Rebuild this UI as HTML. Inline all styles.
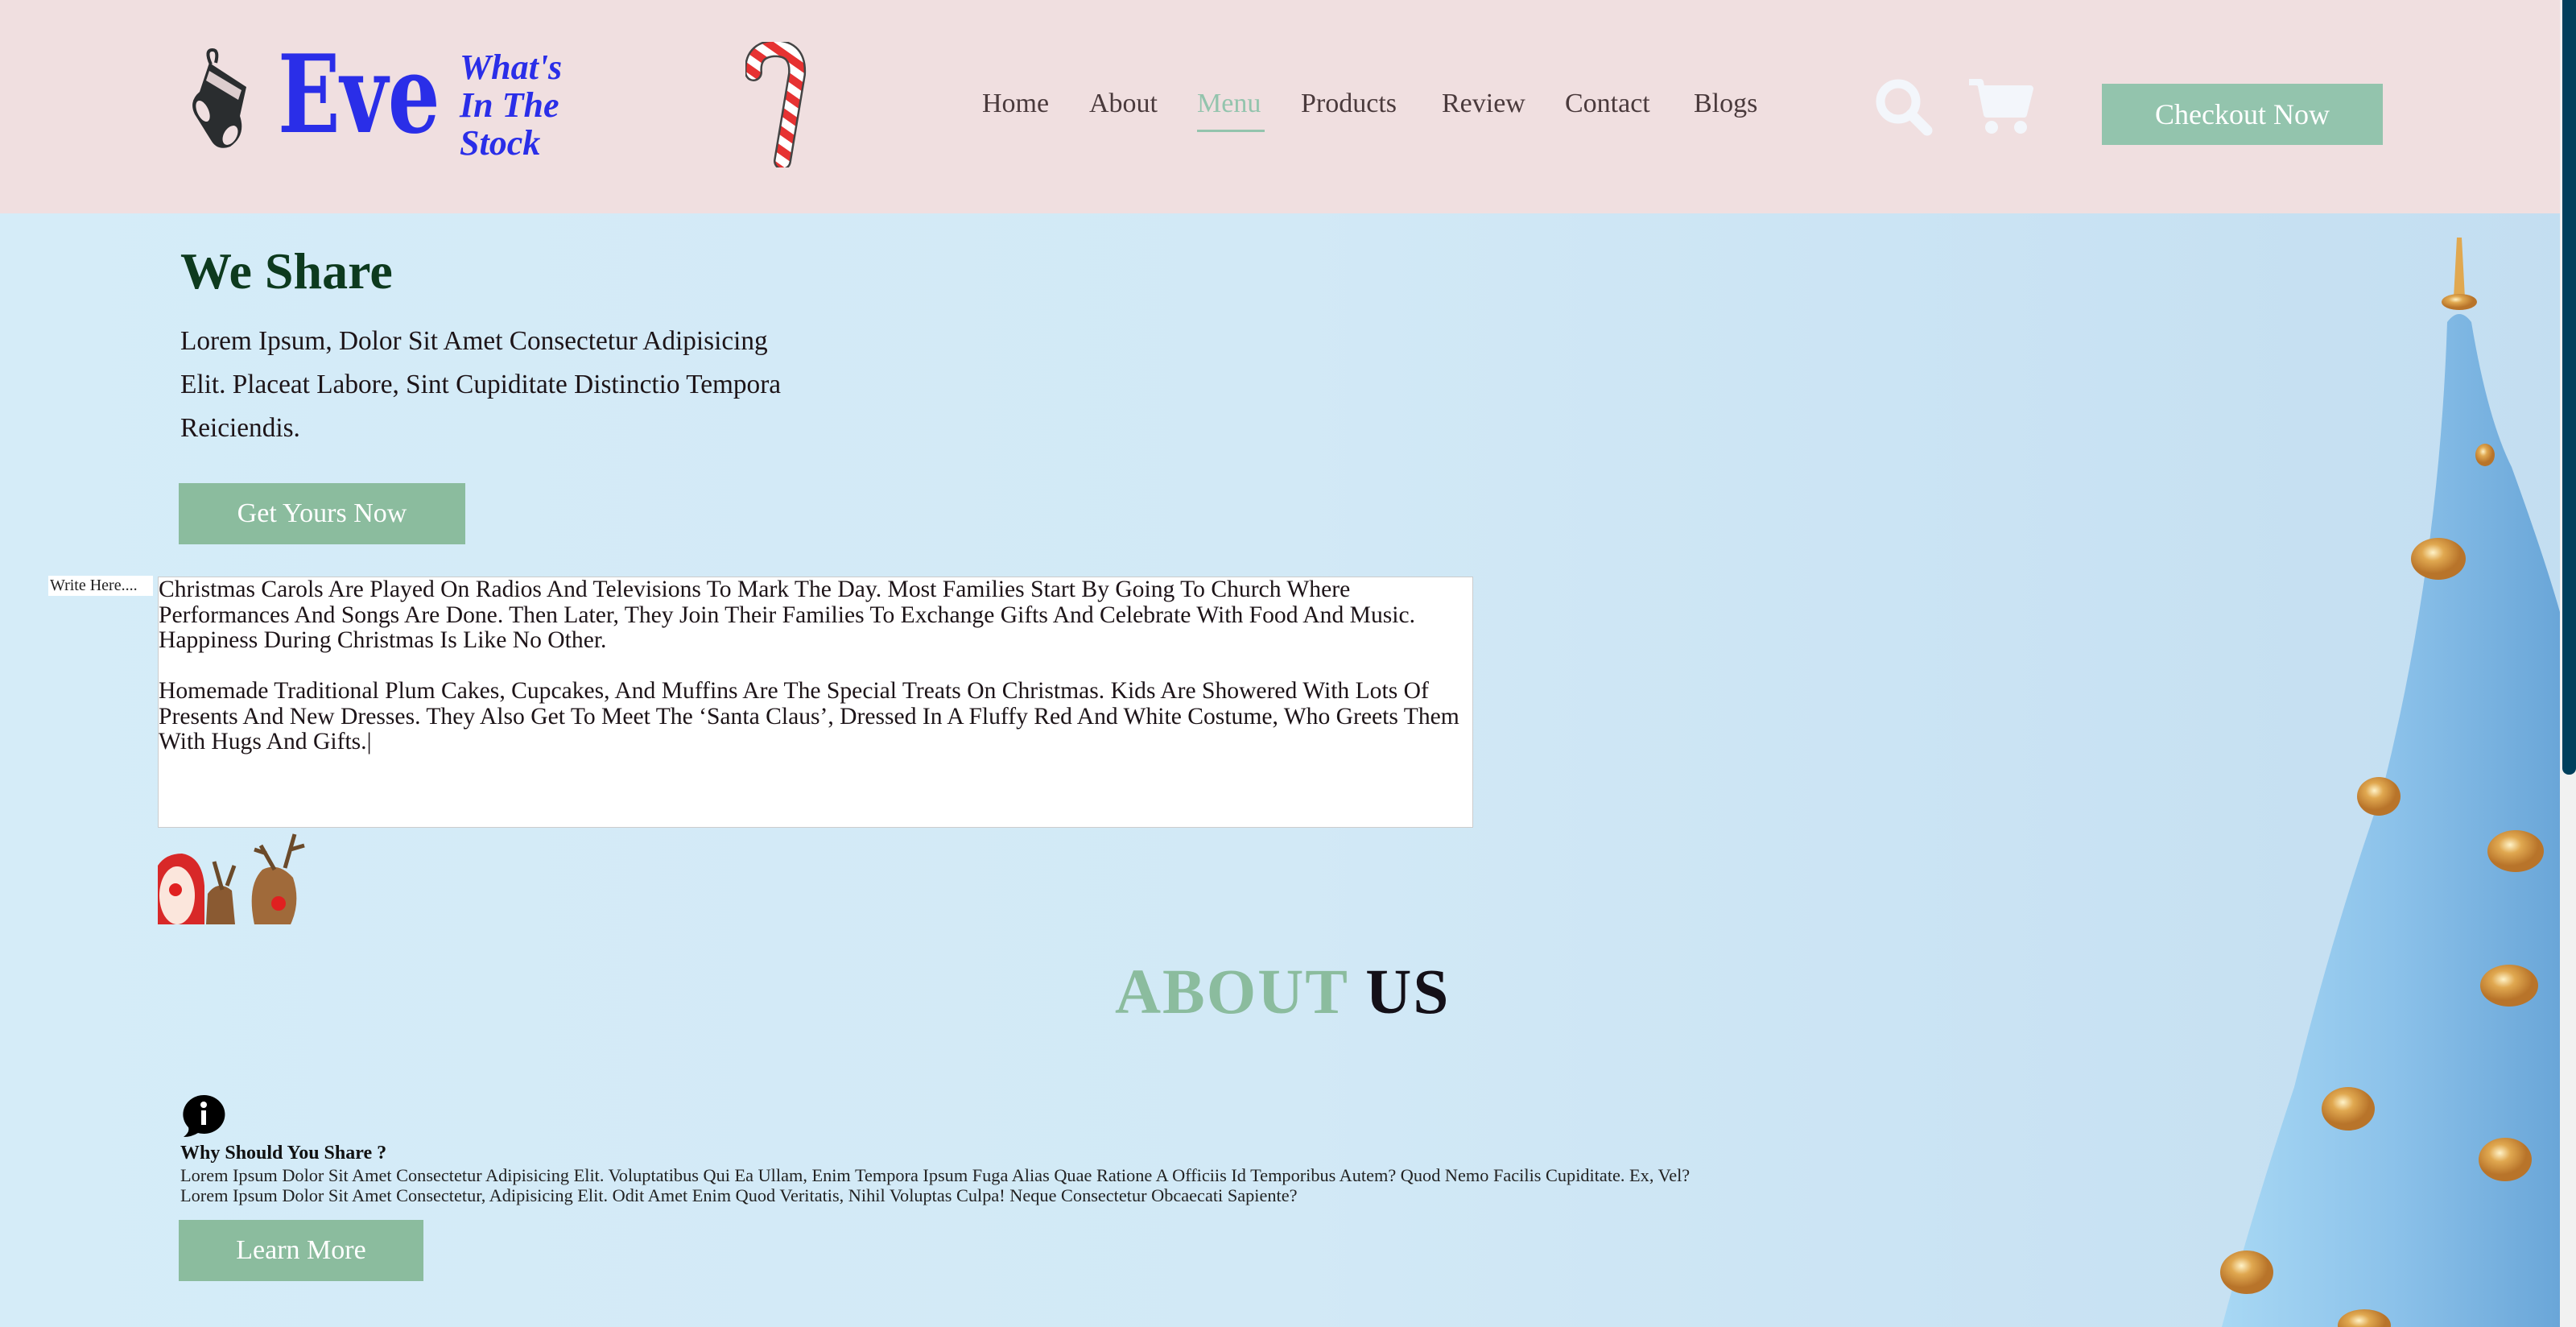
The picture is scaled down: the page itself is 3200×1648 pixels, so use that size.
<!DOCTYPE html>
<html><head><meta charset="utf-8"><style>
*{margin:0;padding:0;box-sizing:border-box}
body{width:3200px;height:1648px;overflow:hidden;position:relative;font-family:"Liberation Serif",serif;background:linear-gradient(90deg,#d5ecf8 0%,#d2e9f6 50%,#c3def1 100%)}
.a{position:absolute;white-space:nowrap}
header{position:absolute;left:0;top:0;width:3180px;height:265px;background:#f0dfe0}
.nav{font-size:34px;color:#4a3a3c;top:110px}
.btn{position:absolute;background:#8bbc9e;color:#fff;display:flex;align-items:center;justify-content:center}
</style></head><body>
<header>
<svg class="a" style="left:236px;top:58px" width="84" height="128" viewBox="0 0 84 128">
<path d="M26 22 Q18 4 28 4 Q36 4 32 20" fill="none" stroke="#2a2d2f" stroke-width="4"/>
<path d="M24 20 L70 50 L62 86 Q70 110 50 124 Q34 130 26 116 L6 84 Q-2 68 12 56 Z" fill="#2a2d2f"/>
<path d="M24 30 L64 54 L60 66 L20 42Z" fill="#f0dfe0" opacity=".9"/>
<ellipse cx="16" cy="80" rx="7" ry="14" fill="#f0dfe0" transform="rotate(-25 16 80)"/>
<ellipse cx="50" cy="110" rx="8" ry="13" fill="#f0dfe0" transform="rotate(30 50 110)"/>
</svg>
<div class="a" style="left:345px;top:50px;font-size:134px;font-weight:bold;color:#2a2ee8;line-height:1;font-family:'DejaVu Serif',serif;transform:scaleX(.76);transform-origin:left">Eve</div>
<div class="a" style="left:571px;top:60px;font-size:44px;font-style:italic;font-weight:bold;color:#2a2ee8;line-height:47px">What's<br>In The<br>Stock</div>
<svg class="a" style="left:926px;top:52px" width="76" height="156" viewBox="0 0 76 156">
<defs><pattern id="st" width="20" height="20" patternUnits="userSpaceOnUse" patternTransform="rotate(35)"><rect width="20" height="20" fill="#fff"/><rect width="20" height="10" fill="#e63232"/></pattern></defs>
<path d="M10 38 Q8 10 36 8 Q66 8 64 40 L46 148" fill="none" stroke="#444" stroke-width="22" stroke-linecap="round"/>
<path d="M10 38 Q8 10 36 8 Q66 8 64 40 L46 148" fill="none" stroke="url(#st)" stroke-width="17" stroke-linecap="round"/>
</svg>
<div class="a nav" style="left:1220px">Home</div>
<div class="a nav" style="left:1353px">About</div>
<div class="a nav" style="left:1487px;color:#93c4ad">Menu</div>
<div class="a" style="left:1487px;top:161px;width:84px;height:3px;background:#93c4ad"></div>
<div class="a nav" style="left:1616px">Products</div>
<div class="a nav" style="left:1791px">Review</div>
<div class="a nav" style="left:1944px">Contact</div>
<div class="a nav" style="left:2104px">Blogs</div>
<svg class="a" style="left:2328px;top:96px" width="74" height="74" viewBox="0 0 74 74"><circle cx="30" cy="30" r="22" fill="none" stroke="#f3f6fb" stroke-width="11"/><path d="M46 46 L66 66" stroke="#f3f6fb" stroke-width="13" stroke-linecap="round"/></svg>
<svg class="a" style="left:2444px;top:96px" width="82" height="72" viewBox="0 0 82 72"><path d="M2 6 H16 L24 46 H70 L78 14 H20" fill="#f3f6fb" stroke="#f3f6fb" stroke-width="8" stroke-linejoin="round"/><circle cx="30" cy="62" r="8" fill="#f3f6fb"/><circle cx="66" cy="62" r="8" fill="#f3f6fb"/></svg>
<div class="btn" style="left:2611px;top:104px;width:349px;height:76px;font-size:36px;background:#93c4ad">Checkout Now</div>
</header>
<div class="a" style="left:3180px;top:0;width:20px;height:1648px;background:#f1f1f1"></div>
<div class="a" style="left:3183px;top:0;width:17px;height:962px;background:#003f5c;border-radius:0 0 8px 8px"></div>

<svg class="a" style="left:2700px;top:265px" width="480" height="1383" viewBox="2700 265 480 1383">
<defs><linearGradient id="tg" x1="0" x2="1"><stop offset="0" stop-color="#a8d8f4"/><stop offset=".5" stop-color="#8cc2ea"/><stop offset="1" stop-color="#6aa6d8"/></linearGradient>
<radialGradient id="gd" cx=".4" cy=".35"><stop offset="0" stop-color="#fff3c8"/><stop offset=".4" stop-color="#e0a850"/><stop offset="1" stop-color="#b8742a"/></radialGradient></defs>
<path d="M3040 400 Q3055 380 3070 400 Q3090 520 3120 580 Q3160 690 3180 760 L3180 1648 L2760 1648 Q2800 1500 2850 1350 Q2900 1150 2960 980 Q3030 700 3040 400Z" fill="url(#tg)"/>
<path d="M3052 295 L3058 295 L3062 370 L3048 370Z" fill="#e0a850"/>
<ellipse cx="3055" cy="375" rx="22" ry="10" fill="url(#gd)"/>
<g fill="url(#gd)">
<ellipse cx="3029" cy="694" rx="34" ry="26"/><ellipse cx="3087" cy="565" rx="12" ry="14"/>
<ellipse cx="2955" cy="989" rx="27" ry="24"/><ellipse cx="3125" cy="1057" rx="35" ry="26"/>
<ellipse cx="3117" cy="1224" rx="36" ry="26"/><ellipse cx="2917" cy="1377" rx="33" ry="27"/>
<ellipse cx="3112" cy="1440" rx="33" ry="27"/><ellipse cx="2791" cy="1580" rx="33" ry="27"/><ellipse cx="2937" cy="1646" rx="33" ry="20"/>
</g></svg>

<div class="a" style="left:224px;top:300px;font-size:64px;font-weight:bold;color:#0d3a1e">We Share</div>
<div class="a" style="left:224px;top:397px;font-size:33.3px;line-height:54px;color:#1d1418">Lorem Ipsum, Dolor Sit Amet Consectetur Adipisicing<br>Elit. Placeat Labore, Sint Cupiditate Distinctio Tempora<br>Reiciendis.</div>
<div class="btn" style="left:222px;top:600px;width:356px;height:76px;font-size:34px">Get Yours Now</div>

<div class="a" style="left:60px;top:715px;width:130px;height:25px;background:#fff;font-size:20px;line-height:25px;padding-left:2px;color:#222">Write Here....</div>
<div class="a" style="left:196px;top:716px;width:1634px;height:312px;background:#fff;border:1px solid #ccc;font-size:29.6px;line-height:31.5px;color:#1d1418;padding:0">Christmas Carols Are Played On Radios And Televisions To Mark The Day. Most Families Start By Going To Church Where<br>Performances And Songs Are Done. Then Later, They Join Their Families To Exchange Gifts And Celebrate With Food And Music.<br>Happiness During Christmas Is Like No Other.<br><br>Homemade Traditional Plum Cakes, Cupcakes, And Muffins Are The Special Treats On Christmas. Kids Are Showered With Lots Of<br>Presents And New Dresses. They Also Get To Meet The ‘Santa Claus’, Dressed In A Fluffy Red And White Costume, Who Greets Them<br>With Hugs And Gifts.|</div>

<svg class="a" style="left:196px;top:1030px" width="204" height="118" viewBox="0 0 204 118">
<path d="M0 45 Q10 30 30 30 Q55 34 58 70 L58 118 L0 118Z" fill="#d82828"/>
<ellipse cx="24" cy="82" rx="22" ry="36" fill="#fbe6dc"/><circle cx="22" cy="75" r="8" fill="#e02020"/>
<path d="M60 118 L62 80 Q75 62 92 76 L96 118Z" fill="#8a5a32"/>
<path d="M120 118 Q110 70 130 50 Q150 40 168 60 Q178 90 165 118Z" fill="#a06a3a"/>
<circle cx="150" cy="92" r="9" fill="#e02020"/>
<path d="M145 50 L128 20 M135 30 L120 25 M158 48 L170 6 M165 25 L182 20 M80 75 L70 40 M86 70 L95 45" stroke="#6b4a2a" stroke-width="5"/>
</svg>

<div class="a" style="left:1385px;top:1188px;font-size:79px;font-weight:bold;letter-spacing:2px"><span style="color:#8bbc9e">ABOUT</span> <span style="color:#141018">US</span></div>

<svg class="a" style="left:224px;top:1358px" width="58" height="56" viewBox="0 0 58 56"><path d="M29 2 A26 24 0 1 1 22 49 Q14 54 4 54 Q12 48 10 42 A26 24 0 0 1 29 2Z" fill="#000"/><circle cx="29" cy="14" r="4" fill="#fff"/><rect x="26" y="21" width="6" height="18" fill="#fff"/></svg>
<div class="a" style="left:224px;top:1419px;font-size:24px;font-weight:bold;color:#111">Why Should You Share ?</div>
<div class="a" style="left:224px;top:1447px;font-size:22.3px;line-height:25px;color:#222">Lorem Ipsum Dolor Sit Amet Consectetur Adipisicing Elit. Voluptatibus Qui Ea Ullam, Enim Tempora Ipsum Fuga Alias Quae Ratione A Officiis Id Temporibus Autem? Quod Nemo Facilis Cupiditate. Ex, Vel?<br>Lorem Ipsum Dolor Sit Amet Consectetur, Adipisicing Elit. Odit Amet Enim Quod Veritatis, Nihil Voluptas Culpa! Neque Consectetur Obcaecati Sapiente?</div>
<div class="btn" style="left:222px;top:1515px;width:304px;height:76px;font-size:34px">Learn More</div>
</body></html>
